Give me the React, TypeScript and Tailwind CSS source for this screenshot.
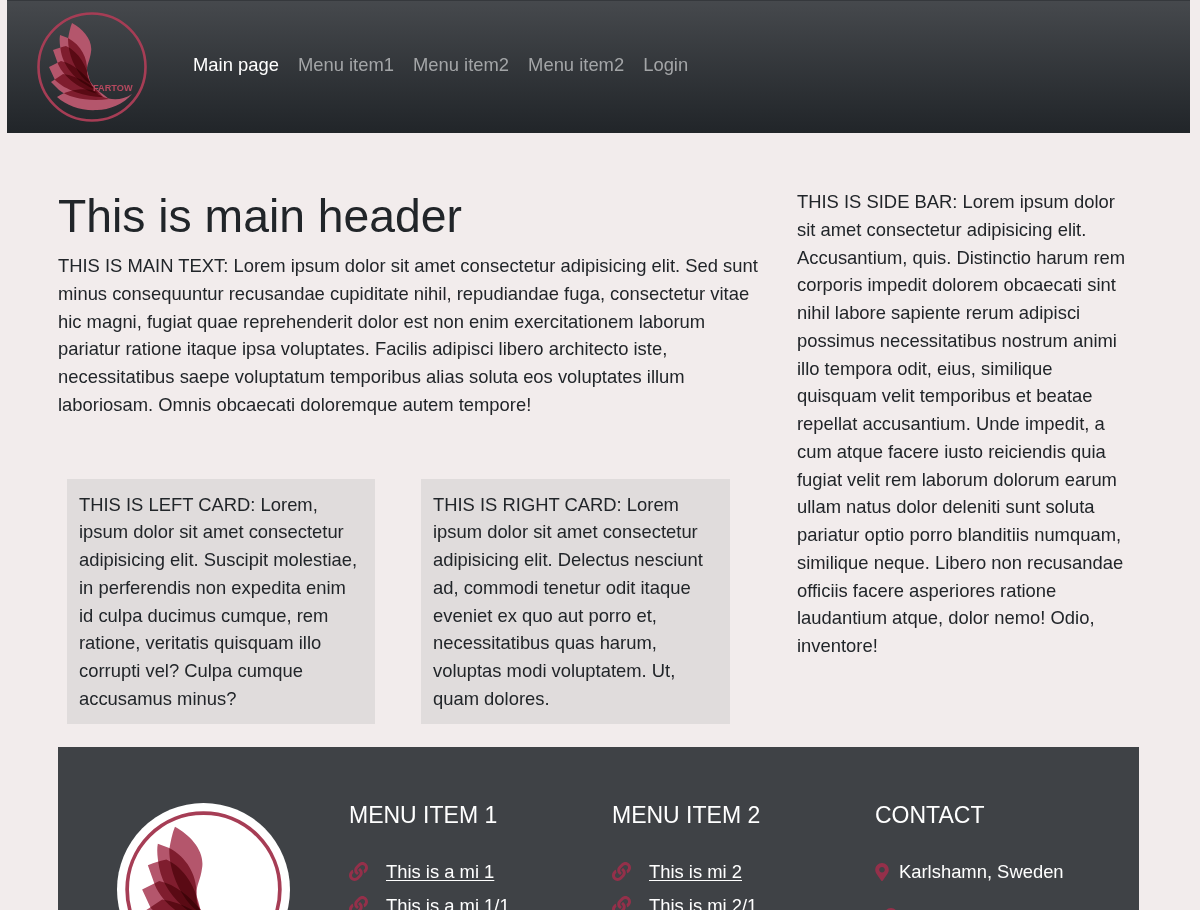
import { FaLink, FaMapMarkerAlt } from "react-icons/fa";

function Logo({ className, showName }: { className: string; showName?: boolean }) {
  return (
    <svg viewBox="0 0 110 110" className={className}>
      <circle cx="55" cy="55" r="53.5" fill="none" stroke="#a63d55" strokeWidth="2.6" />
      <g className="isolate">
        <g fill="#b4566c" className="[&>path]:mix-blend-multiply">
          <path d="M35 11C46 17 56 28 54 40C53 48 50 52 50 58C50 63 52 68 55 73L48 68C38 58 31 42 31 27C32 21 33 16 35 11Z" />
          <path d="M23 23L31 26C44 33 51 46 50 60C50 66 52 70 58 77C42 72 27 56 24 40C23 34 22 28 23 23Z" />
          <path d="M16 38C21 36 25 35 29 34C42 40 50 54 53 70C55 75 58 78 62 82C44 78 27 66 21 52Z" />
          <path d="M12 55L24 49C38 52 50 64 58 76L66 85C48 85 28 78 18 68Z" />
          <path d="M14 70L26 62C42 64 56 74 72 87C52 90 32 86 22 78Z" />
          <path d="M20 85C30 78 44 76 55 78C64 86 80 92 95 82C87 92 72 98 60 98C45 99 30 94 20 85Z" />
        </g>
      </g>
      {showName && (
        <text x="56" y="78.5" fontSize="9.2" fontWeight="700" fill="#b5495f" fontFamily="Liberation Sans, sans-serif">
          FARTOW
        </text>
      )}
    </svg>
  );
}

const navItems = ["Main page", "Menu item1", "Menu item2", "Menu item2", "Login"];

function FooterLink({ text }: { text: string }) {
  return (
    <li className="flex items-center h-[34px]">
      <FaLink className="w-[19px] h-[19px] text-[#94304a] mr-[18px]" />
      <a href="#" className="underline underline-offset-2 text-white">
        {text}
      </a>
    </li>
  );
}

export default function App() {
  return (
    <div className="h-[910px] overflow-hidden bg-[#f2ecec] text-[18.4px] leading-[27.75px] text-[#212529] font-['Liberation_Sans',Arial,sans-serif]">
      <nav className="ml-[7px] mr-[10px] h-[133px] flex items-center bg-gradient-to-b from-[#46494d] to-[#212529] border-t border-[#35383c]">
        <Logo className="w-[110px] h-[110px] ml-[30px] mr-[46px] shrink-0" showName />
        <ul className="flex gap-[19px] -mt-[5px]">
          {navItems.map((item, i) => (
            <li key={i} className={i === 0 ? "text-white" : "text-[#a3a5a7]"}>
              {item}
            </li>
          ))}
        </ul>
      </nav>

      <main className="flex px-[58px] pt-[57px]">
        <div className="w-[739px] shrink-0">
          <h1 className="text-[46.3px] leading-[58px] mb-[7px] -mt-[3px]">This is main header</h1>
          <p className="w-[706px]">
            THIS IS MAIN TEXT: Lorem ipsum dolor sit amet consectetur adipisicing elit. Sed sunt minus consequuntur
            recusandae cupiditate nihil, repudiandae fuga, consectetur vitae hic magni, fugiat quae reprehenderit dolor
            est non enim exercitationem laborum pariatur ratione itaque ipsa voluptates. Facilis adipisci libero
            architecto iste, necessitatibus saepe voluptatum temporibus alias soluta eos voluptates illum laboriosam.
            Omnis obcaecati doloremque autem tempore!
          </p>
          <div className="flex gap-[46px] ml-[9px] mt-[60px]">
            <div className="w-[308px] h-[245px] bg-[#e0dcdc] px-[12px] pt-[12px]">
              THIS IS LEFT CARD: Lorem, ipsum dolor sit amet consectetur adipisicing elit. Suscipit molestiae, in
              perferendis non expedita enim id culpa ducimus cumque, rem ratione, veritatis quisquam illo corrupti vel?
              Culpa cumque accusamus minus?
            </div>
            <div className="w-[309px] h-[245px] bg-[#e0dcdc] px-[12px] pt-[12px]">
              THIS IS RIGHT CARD: Lorem ipsum dolor sit amet consectetur adipisicing elit. Delectus nesciunt ad, commodi
              tenetur odit itaque eveniet ex quo aut porro et, necessitatibus quas harum, voluptas modi voluptatem. Ut,
              quam dolores.
            </div>
          </div>
        </div>
        <aside className="w-[335px] -mt-[2px]">
          THIS IS SIDE BAR: Lorem ipsum dolor sit amet consectetur adipisicing elit. Accusantium, quis. Distinctio harum
          rem corporis impedit dolorem obcaecati sint nihil labore sapiente rerum adipisci possimus necessitatibus
          nostrum animi illo tempora odit, eius, similique quisquam velit temporibus et beatae repellat accusantium.
          Unde impedit, a cum atque facere iusto reiciendis quia fugiat velit rem laborum dolorum earum ullam natus dolor
          deleniti sunt soluta pariatur optio porro blanditiis numquam, similique neque. Libero non recusandae officiis
          facere asperiores ratione laudantium atque, dolor nemo! Odio, inventore!
        </aside>
      </main>

      <footer className="ml-[58px] mr-[61px] mt-[23px] h-[300px] bg-[#3f4246] text-white flex pt-[56px]">
        <div className="ml-[59px] mr-[59px] w-[173px] h-[173px] rounded-full bg-white p-[8px] shrink-0">
          <Logo className="w-[157px] h-[157px]" />
        </div>
        <div className="w-[263px] -mt-[2px]">
          <h4 className="text-[23px] leading-[29px] mb-[25px]">MENU ITEM 1</h4>
          <ul>
            <FooterLink text="This is a mi 1" />
            <FooterLink text="This is a mi 1/1" />
          </ul>
        </div>
        <div className="w-[263px] -mt-[2px]">
          <h4 className="text-[23px] leading-[29px] mb-[25px]">MENU ITEM 2</h4>
          <ul>
            <FooterLink text="This is mi 2" />
            <FooterLink text="This is mi 2/1" />
          </ul>
        </div>
        <div className="w-[263px] -mt-[2px]">
          <h4 className="text-[23px] leading-[29px] mb-[25px]">CONTACT</h4>
          <ul>
            <li className="flex items-center h-[34px]">
              <FaMapMarkerAlt className="w-[14px] h-[18px] text-[#94304a] mr-[10px]" />
              Karlshamn, Sweden
            </li>
            <li className="pl-[9px] pt-[19px]">
              <FaMapMarkerAlt className="w-[14px] h-[18px] text-[#94304a]" />
            </li>
          </ul>
        </div>
      </footer>
    </div>
  );
}
